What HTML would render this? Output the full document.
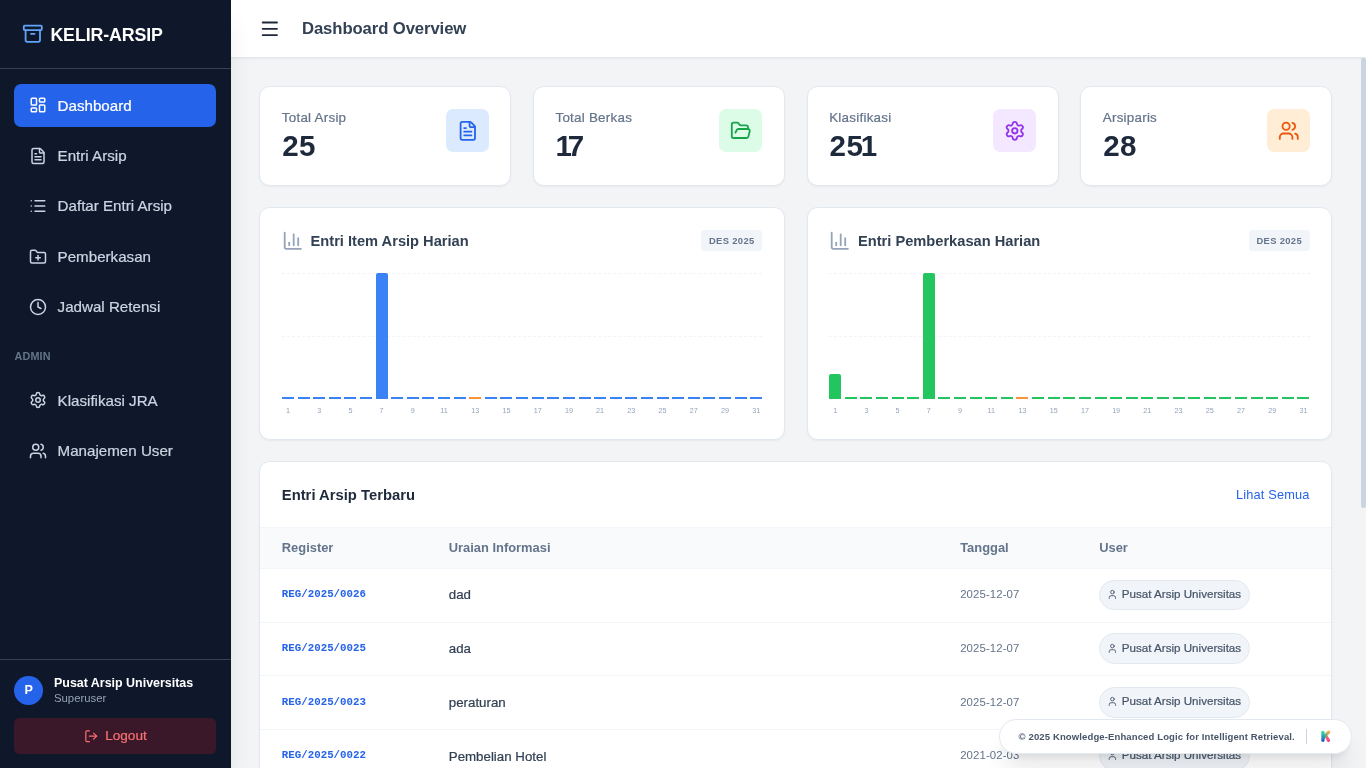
<!DOCTYPE html>
<html lang="id">
<head>
<meta charset="utf-8">
<title>Dashboard Overview - KELIR-ARSIP</title>
<style>
*{box-sizing:border-box;margin:0;padding:0}
html,body{width:1366px;height:768px;overflow:hidden}
body{font-family:"Liberation Sans",sans-serif;background:#f3f4f6;color:#1e293b;position:relative;-webkit-font-smoothing:antialiased}
.sidebar,.topbar,.main{will-change:transform}
svg{display:block;fill:none;stroke:currentColor;stroke-width:2;stroke-linecap:round;stroke-linejoin:round}

/* ---------- sidebar ---------- */
.sidebar{position:absolute;left:0;top:0;width:231px;height:768px;background:#0f172a;color:#fff;z-index:30;box-shadow:0 20px 25px -5px rgba(0,0,0,.1),0 8px 10px -6px rgba(0,0,0,.1)}
.brand{height:69.4px;border-bottom:1px solid #334155;display:flex;align-items:center;padding:0 21.6px}
.brand svg{width:21.6px;height:21.6px;color:#60a5fa;margin-right:7.2px}
.brand span{font-weight:700;font-size:17.8px;letter-spacing:-.1px;line-height:25.2px;position:relative;top:1.2px}
.nav{position:absolute;left:14.4px;top:83.8px;width:201.6px}
.nav a{display:flex;align-items:center;height:43.2px;margin-bottom:7.2px;padding:0 14.4px;border-radius:7.2px;color:#cbd5e1;font-size:15.15px;text-decoration:none}
.nav a svg{width:18px;height:18px;margin-right:10.8px;flex:none}
.nav a.active{background:#2563eb;color:#fff}
.nav .sec{height:36px;padding-top:13px;margin-bottom:7.2px;font-size:10.8px;font-weight:700;color:#64748b;line-height:14.4px;letter-spacing:.2px}
.userbox{position:absolute;left:0;bottom:0;width:231px;height:108.7px;border-top:1px solid #334155;padding:14.4px}
.userrow{display:flex;align-items:center;height:32.4px;position:relative;top:-.8px}
.avatar{width:28.8px;height:28.8px;border-radius:50%;background:#2563eb;color:#fff;font-weight:700;font-size:12.6px;display:flex;align-items:center;justify-content:center;margin-right:10.8px;flex:none}
.uname{font-size:12.45px;font-weight:700;line-height:16px;white-space:nowrap}
.urole{font-size:11.35px;color:#94a3b8;line-height:14.4px}
.logout{margin-top:10.8px;height:36px;width:201.6px;border-radius:5.4px;background:#3b1829;color:#f87171;font-size:13.6px;display:flex;align-items:center;justify-content:center}
.logout svg{width:14.4px;height:14.4px;margin-right:7.2px}

/* ---------- header ---------- */
.topbar{position:absolute;left:230.4px;top:0;width:1135.6px;height:57.6px;background:#fff;border-bottom:1px solid #e2e8f0;box-shadow:0 1px 2px rgba(0,0,0,.05);z-index:20;display:flex;align-items:center;padding-left:28.8px}
.topbar svg{width:21.6px;height:21.6px;color:#1e293b;margin-right:21.6px}
.topbar h1{font-size:16.7px;font-weight:700;color:#334155;letter-spacing:-.1px;position:relative;top:.8px}

/* ---------- main ---------- */
.main{position:absolute;left:0;top:0;width:1366px;height:768px;overflow:hidden}
.card{position:absolute;background:#fff;border:1px solid #e2e8f0;border-radius:10.8px;box-shadow:0 1px 2px rgba(0,0,0,.05)}
.stat{top:86.4px;width:252.05px;height:99.2px;padding:21.6px}
.stat .lbl{font-size:13.4px;line-height:18px;color:#64748b;letter-spacing:.25px}
.stat .num{font-size:29.6px;line-height:32.4px;font-weight:700;color:#1e293b;margin-top:3.1px;margin-left:.4px;letter-spacing:.35px}
.stat .ico{position:absolute;right:21.6px;top:21.6px;width:43.2px;height:43.2px;border-radius:7.2px;display:flex;align-items:center;justify-content:center}
.stat .ico svg{width:21.6px;height:21.6px}
.i-blue{background:#dbeafe;color:#2563eb}.i-green{background:#dcfce7;color:#16a34a}.i-purple{background:#f3e8ff;color:#9333ea}.i-orange{background:#ffedd5;color:#ea580c}

/* ---------- charts ---------- */
.chart{top:207.2px;width:525.7px;height:232.4px}
.chart .hd{position:absolute;left:21.6px;top:21.6px;right:21.6px;height:21.6px;display:flex;align-items:center}
.chart .hd svg{width:21.6px;height:21.6px;color:#94a3b8;margin-right:7.2px}
.chart .hd b{font-size:14.65px;color:#334155;font-weight:700}
.chart .badge{position:absolute;right:0;top:0;height:21px;width:61px;text-align:center;border-radius:3.6px;background:#f1f5f9;color:#64748b;font-size:9.4px;font-weight:700;line-height:21px;letter-spacing:.35px}
.plot{position:absolute;left:21.6px;top:64.8px;width:480.5px;height:126px}
.plot .g{position:absolute;left:0;right:0;height:0;border-top:1px dashed #f1f5f9}
.plot i{position:absolute;bottom:0;width:12px;height:2px;background:#3b82f6}
.plot.green i{background:#22c55e}
.plot i.today{background:#fb923c}
.plot i.big{border-radius:2px 2px 0 0}
.plot u{position:absolute;top:133.2px;width:20px;margin-left:-4px;text-align:center;font-size:7.2px;line-height:9px;color:#94a3b8;text-decoration:none}

/* ---------- table ---------- */
.tbl{left:259.2px;top:461.2px;width:1073px;height:340px;border-radius:10.8px 10.8px 0 0;overflow:hidden}
.tbl .th{position:absolute;left:0;right:0;top:0;height:65.8px;border-bottom:1px solid #f1f5f9}
.tbl .th b{position:absolute;left:21.6px;top:22.4px;font-size:14.8px;line-height:21.6px;color:#1e293b;font-weight:700}
.tbl .th a{position:absolute;right:21.6px;top:23.4px;font-size:12.8px;line-height:18px;color:#2563eb;letter-spacing:.15px}
.tbl .hr{position:absolute;left:0;right:0;top:65.8px;height:41px;background:#f8fafc;border-bottom:1px solid #f1f5f9;font-size:12.9px;font-weight:700;color:#64748b;line-height:40.2px}
.tbl .hr span,.tbl .r span{position:absolute;top:0;white-space:nowrap}
.c1{left:21.6px}.c2{left:188.6px}.c3{left:700px}.c4{left:839px}
.tbl .r{position:absolute;left:0;right:0;height:53.6px;border-bottom:1px solid #f1f5f9;line-height:51.9px}
.tbl .r .c1{font-family:"Liberation Mono",monospace;font-weight:700;font-size:10.8px;color:#2563eb;line-height:50.3px}
.tbl .r .c2{font-size:13.3px;color:#334155}
.tbl .r .c3{font-size:11.4px;color:#64748b;letter-spacing:.1px;line-height:50.3px}
.tbl .r3 span{top:.8px}.tbl .r4 .c2{top:.8px}
.pill,.stat .lbl,.nav a,.tbl .r .c2,.logout{-webkit-text-stroke:.22px currentColor}
.pill{position:absolute;left:839px;top:10.6px;height:30.8px;width:151px;border:1px solid #e2e8f0;background:#f1f5f9;border-radius:15.4px;display:flex;align-items:center;padding-left:7.2px;padding-bottom:1.4px;font-size:11.62px;line-height:14.4px;color:#475569;white-space:nowrap}
.pill svg{width:10.8px;height:10.8px;margin-right:3.6px;color:#475569;flex:none;position:relative;top:.25px}

/* ---------- footer pill + scrollbar ---------- */
.foot{position:absolute;left:999px;top:719px;width:353px;height:35px;border-radius:17.5px;background:rgba(255,255,255,.96);border:1px solid #e2e8f0;box-shadow:0 18px 23px -5px rgba(0,0,0,.1),0 7px 9px -5px rgba(0,0,0,.1);z-index:40}
.foot span{position:absolute;left:18.6px;top:0;line-height:34.6px;font-size:9.52px;font-weight:700;color:#475569;white-space:nowrap;letter-spacing:.12px}
.foot i{position:absolute;left:306px;top:9px;width:1px;height:15px;background:#cbd5e1}
.foot svg{position:absolute;left:316px;top:6px;width:20px;height:20px;stroke:none}
.sb{position:absolute;left:1360.6px;top:57.6px;width:5.4px;height:450px;border-radius:2.7px;background:#cbd5e1;z-index:10}
</style>
</head>
<body>

<aside class="sidebar">
  <div class="brand">
    <svg viewBox="0 0 24 24"><rect width="20" height="5" x="2" y="3" rx="1"/><path d="M4 8v11a2 2 0 0 0 2 2h12a2 2 0 0 0 2-2V8"/><path d="M10 12h4"/></svg>
    <span>KELIR-ARSIP</span>
  </div>
  <nav class="nav">
    <a class="active"><svg viewBox="0 0 24 24"><rect width="7" height="9" x="3" y="3" rx="1"/><rect width="7" height="5" x="14" y="3" rx="1"/><rect width="7" height="9" x="14" y="12" rx="1"/><rect width="7" height="5" x="3" y="16" rx="1"/></svg>Dashboard</a>
    <a><svg viewBox="0 0 24 24"><path d="M6 22a2 2 0 0 1-2-2V4a2 2 0 0 1 2-2h8a2.4 2.4 0 0 1 1.704.706l3.588 3.588A2.4 2.4 0 0 1 20 8v12a2 2 0 0 1-2 2z"/><path d="M14 2v5a1 1 0 0 0 1 1h5"/><path d="M10 9H8"/><path d="M16 13H8"/><path d="M16 17H8"/></svg>Entri Arsip</a>
    <a><svg viewBox="0 0 24 24"><path d="M3 5h.01"/><path d="M3 12h.01"/><path d="M3 19h.01"/><path d="M8 5h13"/><path d="M8 12h13"/><path d="M8 19h13"/></svg><span style="position:relative;top:-1px">Daftar Entri Arsip</span></a>
    <a><svg viewBox="0 0 24 24"><path d="M12 10v6"/><path d="M9 13h6"/><path d="M20 20a2 2 0 0 0 2-2V8a2 2 0 0 0-2-2h-7.9a2 2 0 0 1-1.69-.9L9.6 3.9A2 2 0 0 0 7.93 3H4a2 2 0 0 0-2 2v13a2 2 0 0 0 2 2Z"/></svg>Pemberkasan</a>
    <a><svg viewBox="0 0 24 24"><circle cx="12" cy="12" r="10"/><polyline points="12 6 12 12 16 14"/></svg>Jadwal Retensi</a>
    <div class="sec">ADMIN</div>
    <a><svg viewBox="0 0 24 24"><path d="M9.671 4.136a2.34 2.34 0 0 1 4.659 0 2.34 2.34 0 0 0 3.319 1.915 2.34 2.34 0 0 1 2.33 4.033 2.34 2.34 0 0 0 0 3.831 2.34 2.34 0 0 1-2.33 4.033 2.34 2.34 0 0 0-3.319 1.915 2.34 2.34 0 0 1-4.659 0 2.34 2.34 0 0 0-3.32-1.915 2.34 2.34 0 0 1-2.33-4.033 2.34 2.34 0 0 0 0-3.831A2.34 2.34 0 0 1 6.35 6.051a2.34 2.34 0 0 0 3.319-1.915"/><circle cx="12" cy="12" r="3"/></svg>Klasifikasi JRA</a>
    <a><svg viewBox="0 0 24 24"><path d="M16 21v-2a4 4 0 0 0-4-4H6a4 4 0 0 0-4 4v2"/><circle cx="9" cy="7" r="4"/><path d="M22 21v-2a4 4 0 0 0-3-3.87"/><path d="M16 3.13a4 4 0 0 1 0 7.75"/></svg>Manajemen User</a>
  </nav>
  <div class="userbox">
    <div class="userrow">
      <div class="avatar">P</div>
      <div><div class="uname">Pusat Arsip Universitas</div><div class="urole">Superuser</div></div>
    </div>
    <div class="logout"><svg viewBox="0 0 24 24"><path d="M9 21H5a2 2 0 0 1-2-2V5a2 2 0 0 1 2-2h4"/><polyline points="16 17 21 12 16 7"/><line x1="21" x2="9" y1="12" y2="12"/></svg>Logout</div>
  </div>
</aside>

<header class="topbar">
  <svg viewBox="0 0 24 24"><path d="M4 5h16"/><path d="M4 12h16"/><path d="M4 19h16"/></svg>
  <h1>Dashboard Overview</h1>
</header>

<main class="main">
<div class="card stat" style="left:259.2px"><div class="lbl">Total Arsip</div><div class="num">25</div><div class="ico i-blue" style="right:20.8px"><svg viewBox="0 0 24 24"><path d="M6 22a2 2 0 0 1-2-2V4a2 2 0 0 1 2-2h8a2.4 2.4 0 0 1 1.704.706l3.588 3.588A2.4 2.4 0 0 1 20 8v12a2 2 0 0 1-2 2z"/><path d="M14 2v5a1 1 0 0 0 1 1h5"/><path d="M10 9H8"/><path d="M16 13H8"/><path d="M16 17H8"/></svg></div></div>
<div class="card stat" style="left:532.85px"><div class="lbl">Total Berkas</div><div class="num"><span style="margin-left:-.3px;margin-right:-4.7px">1</span>7</div><div class="ico i-green"><svg viewBox="0 0 24 24"><path d="m6 14 1.5-2.9A2 2 0 0 1 9.24 10H20a2 2 0 0 1 1.94 2.5l-1.54 6a2 2 0 0 1-1.95 1.5H4a2 2 0 0 1-2-2V5a2 2 0 0 1 2-2h3.9a2 2 0 0 1 1.69.9l.81 1.2a2 2 0 0 0 1.67.9H18a2 2 0 0 1 2 2v2"/></svg></div></div>
<div class="card stat" style="left:806.6px"><div class="lbl">Klasifikasi</div><div class="num">25<span style="margin-left:-2.5px;margin-right:-3.5px">1</span></div><div class="ico i-purple"><svg viewBox="0 0 24 24"><path d="M9.671 4.136a2.34 2.34 0 0 1 4.659 0 2.34 2.34 0 0 0 3.319 1.915 2.34 2.34 0 0 1 2.33 4.033 2.34 2.34 0 0 0 0 3.831 2.34 2.34 0 0 1-2.33 4.033 2.34 2.34 0 0 0-3.319 1.915 2.34 2.34 0 0 1-4.659 0 2.34 2.34 0 0 0-3.32-1.915 2.34 2.34 0 0 1-2.33-4.033 2.34 2.34 0 0 0 0-3.831A2.34 2.34 0 0 1 6.35 6.051a2.34 2.34 0 0 0 3.319-1.915"/><circle cx="12" cy="12" r="3"/></svg></div></div>
<div class="card stat" style="left:1080.15px"><div class="lbl">Arsiparis</div><div class="num">28</div><div class="ico i-orange" style="right:20.8px"><svg viewBox="0 0 24 24"><path d="M16 21v-2a4 4 0 0 0-4-4H6a4 4 0 0 0-4 4v2"/><circle cx="9" cy="7" r="4"/><path d="M22 21v-2a4 4 0 0 0-3-3.87"/><path d="M16 3.13a4 4 0 0 1 0 7.75"/></svg></div></div>
<div class="card chart" style="left:259.2px"><div class="hd"><svg viewBox="0 0 24 24"><path d="M3 3v16a2 2 0 0 0 2 2h16"/><path d="M18 17V9"/><path d="M13 17V5"/><path d="M8 17v-3"/></svg><b>Entri Item Arsip Harian</b><span class="badge">DES 2025</span></div>
<div class="plot" style="left:21.78px"><div class="g" style="top:0"></div><div class="g" style="top:63px"></div><i style="left:0.00px"></i><u style="left:0.00px">1</u><i style="left:15.61px"></i><i style="left:31.22px"></i><u style="left:31.22px">3</u><i style="left:46.82px"></i><i style="left:62.43px"></i><u style="left:62.43px">5</u><i style="left:78.04px"></i><i class="big" style="left:93.65px;height:126.0px"></i><u style="left:93.65px">7</u><i style="left:109.26px"></i><i style="left:124.86px"></i><u style="left:124.86px">9</u><i style="left:140.47px"></i><i style="left:156.08px"></i><u style="left:156.08px">11</u><i style="left:171.69px"></i><i class="today" style="left:187.30px"></i><u style="left:187.30px">13</u><i style="left:202.90px"></i><i style="left:218.51px"></i><u style="left:218.51px">15</u><i style="left:234.12px"></i><i style="left:249.73px"></i><u style="left:249.73px">17</u><i style="left:265.34px"></i><i style="left:280.94px"></i><u style="left:280.94px">19</u><i style="left:296.55px"></i><i style="left:312.16px"></i><u style="left:312.16px">21</u><i style="left:327.77px"></i><i style="left:343.38px"></i><u style="left:343.38px">23</u><i style="left:358.98px"></i><i style="left:374.59px"></i><u style="left:374.59px">25</u><i style="left:390.20px"></i><i style="left:405.81px"></i><u style="left:405.81px">27</u><i style="left:421.42px"></i><i style="left:437.02px"></i><u style="left:437.02px">29</u><i style="left:452.63px"></i><i style="left:468.24px"></i><u style="left:468.24px">31</u></div></div>
<div class="card chart" style="left:806.6px"><div class="hd"><svg viewBox="0 0 24 24"><path d="M3 3v16a2 2 0 0 0 2 2h16"/><path d="M18 17V9"/><path d="M13 17V5"/><path d="M8 17v-3"/></svg><b>Entri Pemberkasan Harian</b><span class="badge">DES 2025</span></div>
<div class="plot green"><div class="g" style="top:0"></div><div class="g" style="top:63px"></div><i class="big" style="left:0.00px;height:25.2px"></i><u style="left:0.00px">1</u><i style="left:15.61px"></i><i style="left:31.22px"></i><u style="left:31.22px">3</u><i style="left:46.82px"></i><i style="left:62.43px"></i><u style="left:62.43px">5</u><i style="left:78.04px"></i><i class="big" style="left:93.65px;height:126.0px"></i><u style="left:93.65px">7</u><i style="left:109.26px"></i><i style="left:124.86px"></i><u style="left:124.86px">9</u><i style="left:140.47px"></i><i style="left:156.08px"></i><u style="left:156.08px">11</u><i style="left:171.69px"></i><i class="today" style="left:187.30px"></i><u style="left:187.30px">13</u><i style="left:202.90px"></i><i style="left:218.51px"></i><u style="left:218.51px">15</u><i style="left:234.12px"></i><i style="left:249.73px"></i><u style="left:249.73px">17</u><i style="left:265.34px"></i><i style="left:280.94px"></i><u style="left:280.94px">19</u><i style="left:296.55px"></i><i style="left:312.16px"></i><u style="left:312.16px">21</u><i style="left:327.77px"></i><i style="left:343.38px"></i><u style="left:343.38px">23</u><i style="left:358.98px"></i><i style="left:374.59px"></i><u style="left:374.59px">25</u><i style="left:390.20px"></i><i style="left:405.81px"></i><u style="left:405.81px">27</u><i style="left:421.42px"></i><i style="left:437.02px"></i><u style="left:437.02px">29</u><i style="left:452.63px"></i><i style="left:468.24px"></i><u style="left:468.24px">31</u></div></div>
<div class="card tbl"><div class="th"><b>Entri Arsip Terbaru</b><a>Lihat Semua</a></div>
<div class="hr"><span class="c1">Register</span><span class="c2">Uraian Informasi</span><span class="c3">Tanggal</span><span class="c4">User</span></div>
<div class="r" style="top:106.80px"><span class="c1">REG/2025/0026</span><span class="c2">dad</span><span class="c3">2025-12-07</span><div class="pill"><svg viewBox="0 0 24 24"><path d="M19 21v-2a4 4 0 0 0-4-4H9a4 4 0 0 0-4 4v2"/><circle cx="12" cy="7" r="4"/></svg>Pusat Arsip Universitas</div></div>
<div class="r" style="top:160.40px"><span class="c1">REG/2025/0025</span><span class="c2">ada</span><span class="c3">2025-12-07</span><div class="pill"><svg viewBox="0 0 24 24"><path d="M19 21v-2a4 4 0 0 0-4-4H9a4 4 0 0 0-4 4v2"/><circle cx="12" cy="7" r="4"/></svg>Pusat Arsip Universitas</div></div>
<div class="r r3" style="top:214.00px"><span class="c1">REG/2025/0023</span><span class="c2">peraturan</span><span class="c3">2025-12-07</span><div class="pill"><svg viewBox="0 0 24 24"><path d="M19 21v-2a4 4 0 0 0-4-4H9a4 4 0 0 0-4 4v2"/><circle cx="12" cy="7" r="4"/></svg>Pusat Arsip Universitas</div></div>
<div class="r r4" style="top:267.60px"><span class="c1">REG/2025/0022</span><span class="c2">Pembelian Hotel</span><span class="c3">2021-02-03</span><div class="pill"><svg viewBox="0 0 24 24"><path d="M19 21v-2a4 4 0 0 0-4-4H9a4 4 0 0 0-4 4v2"/><circle cx="12" cy="7" r="4"/></svg>Pusat Arsip Universitas</div></div>
<div class="r" style="top:321.20px"><span class="c1">REG/2025/0021</span><span class="c2">Pembelian Hotel</span><span class="c3">2021-02-03</span><div class="pill"><svg viewBox="0 0 24 24"><path d="M19 21v-2a4 4 0 0 0-4-4H9a4 4 0 0 0-4 4v2"/><circle cx="12" cy="7" r="4"/></svg>Pusat Arsip Universitas</div></div>
</div>
<div class="sb"></div>
<div class="foot"><span>&copy; 2025 Knowledge-Enhanced Logic for Intelligent Retrieval.</span><i></i>
<svg viewBox="0 0 20 20"><defs>
<linearGradient id="k1" gradientUnits="userSpaceOnUse" x1="7" y1="5" x2="7" y2="16"><stop offset="0" stop-color="#2ee6a0"/><stop offset=".5" stop-color="#2a9db5"/><stop offset="1" stop-color="#2348c4"/></linearGradient>
<linearGradient id="k2" gradientUnits="userSpaceOnUse" x1="8" y1="11.5" x2="13" y2="6"><stop offset="0" stop-color="#2fa3a3"/><stop offset=".3" stop-color="#4ca898"/><stop offset=".6" stop-color="#a8ad6c"/><stop offset="1" stop-color="#fba94c"/></linearGradient>
<linearGradient id="k3" gradientUnits="userSpaceOnUse" x1="10" y1="10.5" x2="12.8" y2="14.8"><stop offset="0" stop-color="#f4775a"/><stop offset="1" stop-color="#ee3f96"/></linearGradient>
</defs>
<path d="M10.7 11.3L12.5 14.4" stroke="url(#k3)" stroke-width="3.1" stroke-linecap="round" fill="none"/>
<path d="M12.7 6.1L7.6 11.4" stroke="url(#k2)" stroke-width="3.1" stroke-linecap="round" fill="none"/>
<path d="M6.95 6.35V14.25" stroke="url(#k1)" stroke-width="3.3" stroke-linecap="round" fill="none"/>
</svg></div>

</main>

</body>
</html>
